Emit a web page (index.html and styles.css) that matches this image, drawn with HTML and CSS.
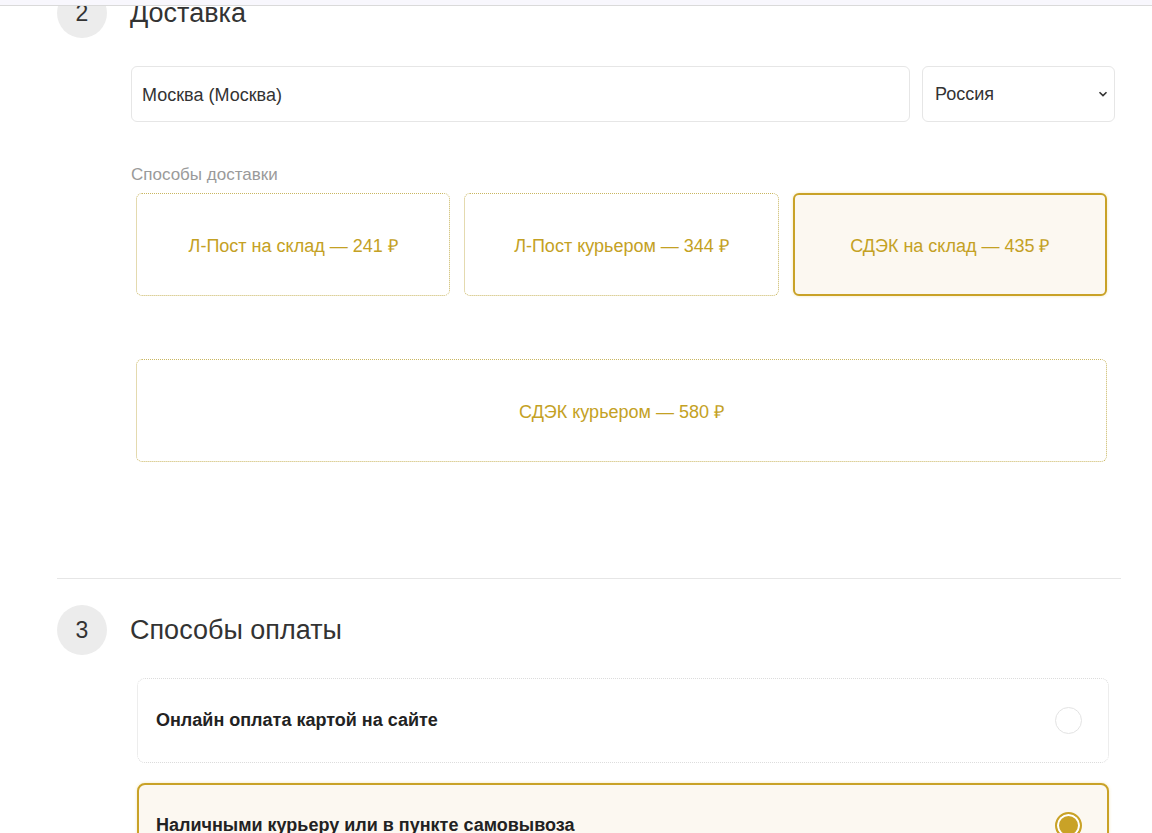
FILE: index.html
```
<!DOCTYPE html>
<html lang="ru">
<head>
    <meta charset="UTF-8">
    <meta name="viewport" content="width=device-width, initial-scale=1.0">
    <title>Оформление заказа</title>
    <link rel="stylesheet" href="styles.css">
</head>
<body>
    <div class="topbar"></div>
    <main class="checkout">
        <section class="step">
            <div class="step-head">
                <span class="step-num">2</span>
                <h2>Доставка</h2>
            </div>
            <div class="step-body">
                <div class="address-row">
                    <input type="text" class="field city" value="Москва (Москва)" />
                    <div class="field country">
                        <span>Россия</span>
                        <svg width="10" height="6" viewBox="0 0 10 6"><path d="M1.5 1.2 5 4.6 8.5 1.2" fill="none" stroke="#333" stroke-width="1.6"/></svg>
                    </div>
                </div>
                <div class="group-label">Способы доставки</div>
                <div class="delivery-grid">
                    <div class="option">Л-Пост на склад — 241 ₽</div>
                    <div class="option">Л-Пост курьером — 344 ₽</div>
                    <div class="option active">СДЭК на склад — 435 ₽</div>
                    <div class="option wide">СДЭК курьером — 580 ₽</div>
                </div>
            </div>
        </section>

        <hr class="divider">

        <section class="step">
            <div class="step-head">
                <span class="step-num">3</span>
                <h2>Способы оплаты</h2>
            </div>
            <div class="pay-list">
                <div class="pay">
                    <span>Онлайн оплата картой на сайте</span>
                    <span class="radio"></span>
                </div>
                <div class="pay active">
                    <span>Наличными курьеру или в пункте самовывоза</span>
                    <span class="radio"></span>
                </div>
            </div>
        </section>
    </main>
</body>
</html>
```

FILE: styles.css
```
body {
    font-family: "Liberation Sans", Arial, Helvetica, sans-serif;
    background-color: #fff;
    color: #333;
    margin: 0;
    overflow: hidden;
}
.topbar {
    position: fixed;
    top: 0;
    left: 0;
    right: 0;
    height: 5px;
    background-color: #f8f7fd;
    border-bottom: 1px solid #dadada;
    z-index: 10;
}
.checkout {
    width: 1064px;
    margin-top: -12px;
    margin-left: 57px;
}
.step-head {
    display: flex;
    align-items: center;
    gap: 23px;
}
.step-num {
    width: 50px;
    height: 50px;
    border-radius: 50%;
    background-color: #ececec;
    display: flex;
    justify-content: center;
    align-items: center;
    font-size: 23px;
}
.step-head h2 {
    margin: 0;
    font-size: 27px;
    font-weight: normal;
    color: #333;
}
.step-body {
    margin-left: 74px;
    margin-right: 6px;
}
.address-row {
    display: flex;
    gap: 12px;
    margin-top: 28px;
}
.field {
    height: 56px;
    border: 1px solid #e6e6e6;
    border-radius: 6px;
    box-sizing: border-box;
    padding: 2px 10px 0 10px;
    font-family: inherit;
    font-size: 18px;
    color: #333;
    background-color: #fff;
}
.city {
    flex: 1;
    outline: none;
}
.country {
    width: 193px;
    display: flex;
    align-items: center;
    justify-content: space-between;
    padding: 0 6px 0 12px;
}
.group-label {
    margin-top: 43px;
    margin-bottom: 8px;
    font-size: 17px;
    color: #9a9a9a;
}
.delivery-grid {
    display: grid;
    grid-template-columns: repeat(3, 1fr);
    column-gap: 14px;
    row-gap: 63px;
    padding: 0 8px 0 5px;
}
.option {
    height: 103px;
    box-sizing: border-box;
    border: 1px dotted #c9b660;
    border-radius: 6px;
    display: flex;
    justify-content: center;
    align-items: center;
    font-size: 18px;
    color: #c4a124;
}
.option.active {
    border: 2px solid #c9a227;
    background-color: #fcf8f1;
    box-shadow: 0 0 3px rgba(230, 200, 90, 0.45);
}
.option.wide {
    grid-column: 1 / -1;
}
.divider {
    border: none;
    border-top: 1px solid #e6e6e6;
    margin: 116px 0 26px 0;
}
.pay-list {
    margin: 23px 12px 0 80px;
    display: flex;
    flex-direction: column;
    gap: 20px;
}
.pay {
    height: 85px;
    box-sizing: border-box;
    border: 1px dotted #dcdcdc;
    border-radius: 8px;
    display: flex;
    align-items: center;
    justify-content: space-between;
    padding: 0 26px 0 18px;
    font-size: 18px;
    font-weight: bold;
    color: #222;
}
.pay.active {
    border: 2px solid #c9a227;
    background-color: #fcf8f1;
    padding: 0 25px 0 17px;
    box-shadow: 0 0 3px rgba(230, 200, 90, 0.45);
}
.radio {
    width: 27px;
    height: 27px;
    border-radius: 50%;
    border: 1px solid #e3e3e3;
    box-sizing: border-box;
    background-color: #fff;
}
.pay.active .radio {
    border: 2px solid #c9a227;
    background-color: #c9a227;
    box-shadow: inset 0 0 0 2px #fff;
}
```
